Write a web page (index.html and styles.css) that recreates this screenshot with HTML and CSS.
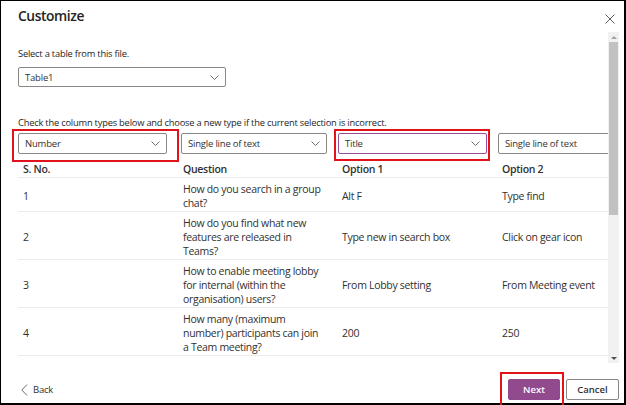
FILE: index.html
```html
<!DOCTYPE html>
<html>
<head>
<meta charset="utf-8">
<link rel="stylesheet" href="styles.css">
</head>
<body>
<div class="frame">
  <div class="header">
    <h1 class="title">Customize</h1>
    <button class="close" aria-label="Close">
      <svg width="10" height="10" viewBox="0 0 10 10"><path d="M0.5 0.5 L9.5 9.5 M9.5 0.5 L0.5 9.5" stroke="#605e5c" stroke-width="1" fill="none"/></svg>
    </button>
  </div>
  <div class="main">
    <div class="body">
      <div class="label">Select a table from this file.</div>
      <div class="dd dd-table">
        <span>Table1</span>
        <svg class="chev" width="9" height="5" viewBox="0 0 9 5"><path d="M0.5 0.5 L4.5 4.5 L8.5 0.5" stroke="#605e5c" stroke-width="0.9" fill="none"/></svg>
      </div>
      <div class="label label-check">Check the column types below and choose a new type if the current selection is incorrect.</div>
      <div class="grid">
        <div class="cell dd-cell">
          <div class="dd c1"><span>Number</span><svg class="chev" width="9" height="5" viewBox="0 0 9 5"><path d="M0.5 0.5 L4.5 4.5 L8.5 0.5" stroke="#605e5c" stroke-width="0.9" fill="none"/></svg></div>
          <div class="mark mark-num"></div>
        </div>
        <div class="cell dd-cell">
          <div class="dd c2"><span>Single line of text</span><svg class="chev" width="9" height="5" viewBox="0 0 9 5"><path d="M0.5 0.5 L4.5 4.5 L8.5 0.5" stroke="#605e5c" stroke-width="0.9" fill="none"/></svg></div>
        </div>
        <div class="cell dd-cell">
          <div class="dd c3 focus"><span>Title</span><svg class="chev" width="9" height="5" viewBox="0 0 9 5"><path d="M0.5 0.5 L4.5 4.5 L8.5 0.5" stroke="#605e5c" stroke-width="0.9" fill="none"/></svg></div>
          <div class="mark mark-title"></div>
        </div>
        <div class="cell dd-cell">
          <div class="dd c4"><span>Single line of text</span><svg class="chev" width="9" height="5" viewBox="0 0 9 5"><path d="M0.5 0.5 L4.5 4.5 L8.5 0.5" stroke="#605e5c" stroke-width="0.9" fill="none"/></svg></div>
        </div>

        <div class="cell th t1">S. No.</div>
        <div class="cell th t2">Question</div>
        <div class="cell th t3">Option 1</div>
        <div class="cell th t4">Option 2</div>

        <div class="cell td t1">1</div>
        <div class="cell td t2">How do you search in a group chat?</div>
        <div class="cell td t3">Alt F</div>
        <div class="cell td t4">Type find</div>

        <div class="cell td t1">2</div>
        <div class="cell td t2">How do you find what new features are released in Teams?</div>
        <div class="cell td t3">Type new in search box</div>
        <div class="cell td t4">Click on gear icon</div>

        <div class="cell td t1">3</div>
        <div class="cell td t2">How to enable meeting lobby for internal (within the organisation) users?</div>
        <div class="cell td t3">From Lobby setting</div>
        <div class="cell td t4">From Meeting event</div>

        <div class="cell td t1">4</div>
        <div class="cell td t2">How many (maximum number) participants can join a Team meeting?</div>
        <div class="cell td t3">200</div>
        <div class="cell td t4">250</div>

        <div class="cell td t1">5</div>
        <div class="cell td t2">Where are the files stored when shared in a chat?</div>
        <div class="cell td t3">OneDrive</div>
        <div class="cell td t4">SharePoint</div>
      </div>
    </div>
    <div class="scrollbar">
      <div class="arrow up"></div>
      <div class="thumb"></div>
      <div class="track-rest"></div>
      <div class="arrow down"></div>
    </div>
  </div>
  <div class="footer">
    <button class="back">
      <svg width="7" height="12" viewBox="0 0 7 12"><path d="M6 0.5 L0.8 6 L6 11.5" stroke="#605e5c" stroke-width="0.9" fill="none"/></svg>
      <span>Back</span>
    </button>
    <div class="actions">
      <div class="next-wrap">
        <button class="btn primary">Next</button>
        <div class="mark mark-next"></div>
      </div>
      <button class="btn secondary">Cancel</button>
    </div>
  </div>
</div>
</body>
</html>
```

FILE: styles.css
```css
* { box-sizing: border-box; }
html, body { margin: 0; padding: 0; }
body {
  width: 626px;
  height: 405px;
  background: #fff;
  font-family: "Open Sans", "Noto Sans", sans-serif;
  color: #323130;
  overflow: hidden;
}
.frame {
  width: 626px;
  height: 405px;
  border-left: 1px solid #000;
  border-top: 1px solid #000;
  border-right: 2px solid #000;
  border-bottom: 2px solid #000;
  display: flex;
  flex-direction: column;
  background: #fff;
}
.header {
  height: 31px;
  flex: none;
  display: flex;
  justify-content: space-between;
  align-items: flex-start;
  padding-left: 17px;
  padding-right: 6px;
}
.title {
  margin: 0;
  margin-top: 5px;
  font-size: 13.8px;
  font-weight: 600;
  line-height: 20px;
  color: #252423;
  letter-spacing: -0.4px;
}
.close {
  border: 0;
  background: none;
  padding: 0;
  margin-top: 13px;
  width: 11px;
  height: 11px;
  margin-right: 2px;
  display: flex;
}
.main {
  display: flex;
  height: 331px;
  flex: none;
}
.body {
  flex: 1;
  overflow: hidden;
  padding-left: 17px;
}
.label {
  font-size: 9.3px;
  letter-spacing: -0.2px;
  line-height: 14px;
  margin-top: 15px;
  color: #252423;
  white-space: nowrap;
}
.label-check { margin-top: 29px; }
.dd {
  position: relative;
  height: 21px;
  border: 1px solid #8a8886;
  border-radius: 2px;
  display: flex;
  align-items: center;
  justify-content: space-between;
  padding: 0 6px 0 6px;
  font-size: 9.5px;
  letter-spacing: -0.2px;
  color: #323130;
  background: #fff;
  white-space: nowrap;
}
.dd-table {
  width: 208px;
  margin-top: 6px;
  height: 20px;
}
.grid {
  margin-top: 3px;
  display: grid;
  grid-template-columns: 160px 160px 160px 160px;
  width: 640px;
}
.dd-cell { position: relative; height: 21px; }
.dd.c1 { width: 149px; }
.dd.c2 { width: 146px; margin-left: 3px; }
.dd.c3 { width: 149px; }
.dd.c4 { width: 149px; }
.dd.focus { border-color: #9a4e95; }
.mark {
  position: absolute;
  border: 2px solid #e2121b;
  pointer-events: none;
}
.mark-num { left: -6px; top: -4px; width: 167px; height: 33px; }
.mark-title { left: -4px; top: -4px; width: 156px; height: 32px; }
.cell {
  font-size: 10.5px;
  letter-spacing: -0.3px;
  line-height: 14px;
  padding-right: 8px;
}
.th {
  font-weight: 600;
  padding-top: 8px;
  height: 24px;
  border-bottom: 1px solid #edebe9;
}
.td {
  padding-top: 4px;
  padding-bottom: 1px;
  border-bottom: 1px solid #edebe9;
  display: flex;
  align-items: center;
  min-height: 34px;
}
.t1 { padding-left: 5px; }
.t2 { padding-left: 5px; padding-right: 15px; }
.t3 { padding-left: 4px; }
.t4 { padding-left: 4px; }
.scrollbar {
  width: 11px;
  margin-right: 5px;
  background: #f1f1f1;
  display: flex;
  flex-direction: column;
}
.arrow {
  height: 10px;
  display: flex;
  align-items: center;
  justify-content: center;
}
.arrow::before {
  content: "";
  width: 0;
  height: 0;
  border-left: 3px solid transparent;
  border-right: 3px solid transparent;
}
.arrow.up::before { border-bottom: 3px solid #a3a3a3; }
.arrow.down::before { border-top: 3px solid #505050; }
.thumb {
  height: 173px;
  margin: 0 1px;
  background: #c1c1c1;
}
.track-rest { flex: 1; }
.footer {
  flex: 1;
  display: flex;
  justify-content: space-between;
  align-items: flex-start;
  padding-left: 20px;
  padding-right: 5px;
}
.back {
  border: 0;
  background: none;
  padding: 0;
  margin-top: 20px;
  display: flex;
  align-items: center;
  gap: 5px;
  font-family: inherit;
  font-size: 9.5px;
  letter-spacing: -0.2px;
  color: #323130;
}
.actions {
  display: flex;
  gap: 6px;
  margin-top: 16px;
}
.next-wrap { position: relative; height: 21px; }
.btn {
  display: block;
  height: 21px;
  border-radius: 2px;
  font-family: inherit;
  font-size: 9.5px;
  font-weight: 600;
  line-height: 19px;
  padding: 0;
}
.primary {
  width: 52px;
  background: #924a8e;
  border: 1px solid #924a8e;
  color: #fff;
}
.secondary {
  width: 53px;
  background: #fff;
  border: 1px solid #8a8886;
  color: #323130;
}
.mark-next { left: -8px; top: -7px; width: 64px; height: 35px; }
```
